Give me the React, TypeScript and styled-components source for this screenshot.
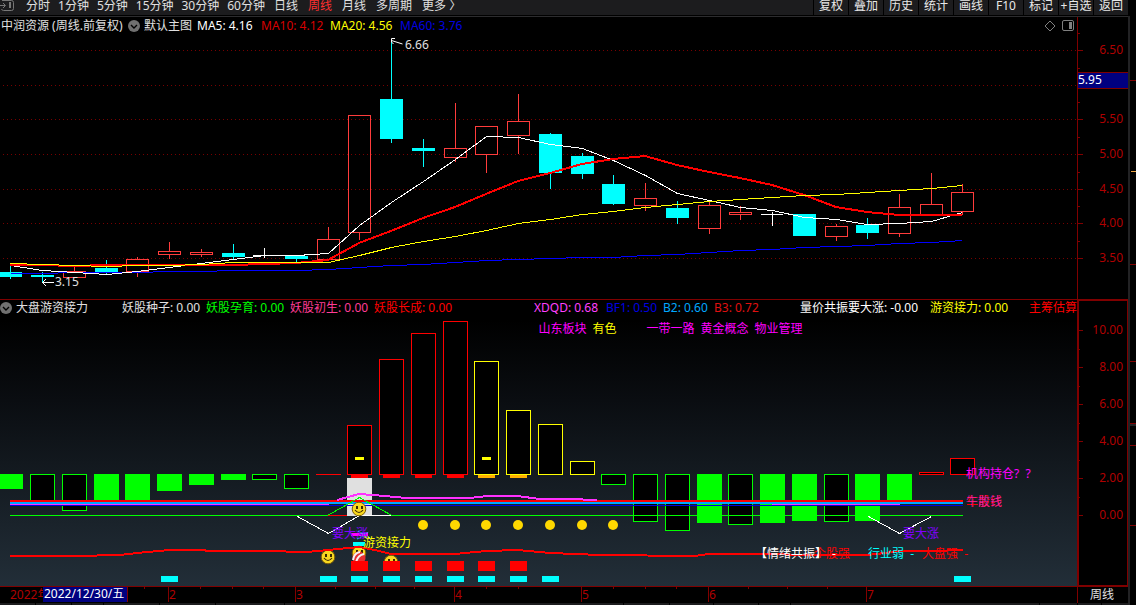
import React from "react";
import styled, { createGlobalStyle } from "styled-components";

const GlobalStyle = createGlobalStyle`
  * { box-sizing: border-box; }
  html, body { margin: 0; background: #000; }
  body, button {
    font-family: "Noto Sans", "Noto Sans CJK SC", sans-serif;
    font-size: 12px;
    line-height: 16px;
  }
  svg { display: block; overflow: hidden; }
  svg text {
    font-family: "Noto Sans", "Noto Sans CJK SC", sans-serif;
    font-size: 12px;
    white-space: pre;
  }
`;

const AXIS_RED = "#800000";
const LABEL_RED = "#b00000";

const Shell = styled.div`
  display: grid;
  grid-template-columns: minmax(0, 1fr) 8px;
  background: #000;
  color: #e0e0e0;
`;

const Main = styled.main`
  display: flex;
  flex-direction: column;
  min-width: 0;
`;

const Toolbar = styled.nav`
  display: flex;
  align-items: flex-start;
  height: 15px;
  background: #1c1c1e;
`;

const ToolbarRule = styled.div`
  height: 2px;
  border-bottom: 1px solid #2c2c2e;
`;

const Periods = styled.div`
  display: flex;
  flex: 1;
  gap: 8px;
  min-width: 0;
  padding-left: 12px;
`;

const PeriodGroup = styled.div`
  display: flex;
  gap: 10px;
  padding-left: 1px;
`;

const PeriodButton = styled.button<{ $active?: boolean }>`
  margin: 0;
  padding: 0;
  border: 0;
  background: none;
  height: 12px;
  line-height: 12px;
  white-space: nowrap;
  color: ${(p) => (p.$active ? "#ff3030" : "#e0e0e0")};
`;

const ToolButton = styled.button`
  flex: none;
  width: 35px;
  height: 15px;
  margin: 0;
  padding: 0 0 3px;
  border: 0;
  border-left: 1px solid #000;
  background: #1c1c1e;
  color: #e8e8e8;
  line-height: 12px;
  white-space: nowrap;
`;

const PanelRow = styled.section`
  display: grid;
  grid-template-columns: minmax(0, 1fr) 51px;
`;

const PricePlot = styled.div`
  height: 282px;
`;

const IndicatorPlot = styled.div`
  position: relative;
  height: 287px;
  border-top: 1px solid ${AXIS_RED};
  background: linear-gradient(#000 20px, #0a0d11 100px, #222e38 286px);
`;

const Legend = styled.div<{ $columns: string; $height: number }>`
  display: grid;
  grid-template-columns: ${(p) => p.$columns};
  align-items: center;
  height: ${(p) => p.$height}px;
  overflow: hidden;
  white-space: nowrap;
`;

const LegendTitle = styled.span<{ $inset?: boolean }>`
  display: flex;
  align-items: center;
  gap: 4px;
  padding-left: ${(p) => (p.$inset ? 1 : 0)}px;
  color: #e0e0e0;
`;

const LegendValue = styled.span<{ $color: string }>`
  color: ${(p) => p.$color};
`;

const LegendTools = styled.span`
  display: flex;
  justify-content: flex-end;
  align-items: center;
  gap: 6px;
  padding-right: 3px;
`;

const RoundButton = styled.button`
  display: block;
  flex: none;
  padding: 0;
  border: 0;
  background: none;
  width: 12px;
  height: 12px;
`;

const Themes = styled.div`
  position: absolute;
  top: 21px;
  left: 50%;
  display: flex;
  gap: 6px;
  white-space: nowrap;
`;

const Theme = styled.span<{ $color: string; $apart?: boolean }>`
  color: ${(p) => p.$color};
  padding-left: ${(p) => (p.$apart ? 12 : 0)}px;
  margin-left: ${(p) => (p.$apart ? 12 : 0)}px;
`;

const TimeRow = styled.div`
  display: grid;
  grid-template-columns: minmax(0, 1fr) 51px;
  height: 17px;
  border-top: 1px solid ${AXIS_RED};
`;

const PeriodCell = styled.div`
  border-left: 1px solid ${AXIS_RED};
  padding-right: 2px;
  text-align: center;
  color: #e0e0e0;
`;

const Footer = styled.div`
  display: flex;
  gap: 1px;
  height: 2px;
`;

const FooterCell = styled.div<{ $grow: number }>`
  flex: ${(p) => p.$grow} 1 0;
  background: #1c1c1e;
`;

const Gutter = styled.aside`
  border-left: 2px solid #222224;
  margin-top: 16px;
`;

const periods = ["分时", "1分钟", "5分钟", "15分钟", "30分钟", "60分钟"];
const longPeriods = ["日线", "周线", "月线", "多周期", "更多 〉"];
const tools = ["复权", "叠加", "历史", "统计", "画线", "F10", "标记", "+自选", "返回"];
const footerCells = [35, 36, 31, 56, 56, 68, 343, 45, 44, 44, 32, 251, 37, 24, 26];

const centres = [
  10, 42, 74, 106, 137, 169, 201, 233, 264, 296, 328, 359, 391, 423, 455, 486,
  518, 550, 582, 613, 645, 677, 709, 740, 772, 804, 836, 867, 899, 931, 962,
];

type Kind = "up" | "down" | "flat";
// kind, body top, body bottom, high, low
const candles: [Kind, number, number, number, number][] = [
  ["down", 272, 277, 266, 279], ["down", 275, 277, 272, 283],
  ["up", 271, 278, 266, 278], ["down", 268, 272, 260, 274],
  ["up", 259, 272, 257, 277], ["up", 251, 255, 242, 259],
  ["up", 252, 255, 249, 257], ["down", 253, 257, 244, 260],
  ["flat", 255, 256, 248, 258], ["down", 256, 259, 255, 262],
  ["up", 239, 260, 227, 260], ["up", 115, 233, 115, 240],
  ["down", 99, 139, 41, 143], ["down", 148, 151, 139, 167],
  ["up", 148, 158, 103, 162], ["up", 126, 155, 126, 173],
  ["up", 121, 136, 94, 154], ["down", 134, 173, 133, 189],
  ["down", 156, 174, 153, 179], ["down", 184, 204, 175, 205],
  ["up", 198, 206, 183, 211], ["down", 208, 218, 201, 224],
  ["up", 205, 229, 201, 234], ["up", 212, 215, 206, 220],
  ["flat", 214, 215, 212, 226], ["down", 214, 236, 214, 236],
  ["up", 226, 237, 224, 241], ["down", 225, 233, 218, 239],
  ["up", 207, 234, 194, 237], ["up", 204, 215, 173, 215],
  ["up", 192, 212, 184, 215],
];

const ma5 = [265, 270, 272, 274, 271, 267, 263, 259, 255, 255, 253, 225, 202, 181, 159, 136, 137, 144, 148, 160, 175, 193, 200, 207, 210, 217, 219, 224, 223, 221, 212];
const ma10 = [265, 265, 266, 265, 265, 265, 265, 265, 264, 263, 260, 243, 231, 218, 207, 194, 181, 173, 164, 159, 156, 165, 172, 178, 185, 195, 207, 212, 215, 215, 215];
const ma20 = [263, 264, 265, 266, 265, 265, 264, 262, 262, 262, 262, 255, 247, 241, 236, 230, 223, 219, 214, 211, 207, 204, 201, 199, 197, 195, 194, 192, 190, 188, 185];
const ma60 = [273, 273, 272, 272, 272, 271, 271, 270, 270, 270, 269, 267, 265, 264, 262, 260, 259, 258, 257, 257, 255, 254, 252, 250, 249, 247, 246, 245, 243, 242, 240];

const series = (values: number[]) => values.map((v, i) => `${centres[i]},${v}`).join(" ");

type Fill = "green" | "greenBox" | "redBox" | "yellowBox";
// style, top, bottom
const bars: [Fill, number, number][] = [
  ["green", 474, 489], ["greenBox", 474, 502], ["greenBox", 474, 511],
  ["green", 474, 502], ["green", 474, 502], ["green", 474, 491],
  ["green", 474, 485], ["green", 474, 480], ["greenBox", 474, 480],
  ["greenBox", 474, 489], ["redBox", 474, 475], ["redBox", 425, 475],
  ["redBox", 359, 475], ["redBox", 333, 475], ["redBox", 321, 475],
  ["yellowBox", 361, 475], ["yellowBox", 410, 475], ["yellowBox", 424, 475],
  ["yellowBox", 461, 475], ["greenBox", 474, 485], ["greenBox", 474, 522],
  ["greenBox", 474, 531], ["green", 474, 523], ["greenBox", 474, 525],
  ["green", 474, 523], ["green", 474, 521], ["greenBox", 474, 522],
  ["green", 474, 521], ["green", 474, 502], ["redBox", 472, 475],
  ["redBox", 458, 475],
];
const strokes: Record<Fill, string> = {
  green: "#00ff00", greenBox: "#00ff00", redBox: "#ff0000", yellowBox: "#ffff00",
};

function Chevron() {
  return (
    <svg width="12" height="12" viewBox="0 0 12 12">
      <circle cx="6" cy="6" r="6" fill="#707070" />
      <path d="M3 5l3 3 3-3" fill="none" stroke="#000" strokeWidth="1.4" />
    </svg>
  );
}

function Smiley({ x, y }: { x: number; y: number }) {
  return (
    <g>
      <circle cx={x} cy={y} r="6.8" fill="#f8d820" stroke="#7a5c08" />
      <rect x={x - 3} y={y - 3} width="2" height="3" fill="#3a2800" />
      <rect x={x + 2} y={y - 3} width="2" height="3" fill="#3a2800" />
      <path d={`M${x - 4} ${y + 1}q4 5 8 0`} fill="none" stroke="#3a2800" strokeWidth="1.2" />
    </g>
  );
}

function Candle({ index }: { index: number }) {
  const [kind, top, bottom, high, low] = candles[index];
  const c = centres[index];
  const left = c - 11;
  if (kind === "down") {
    return (
      <g fill="#00ffff">
        <rect x={c} y={high} width="1" height={low - high} />
        <rect x={left} y={top} width="23" height={bottom - top} />
      </g>
    );
  }
  if (kind === "flat") {
    return (
      <g fill="#fff">
        <rect x={c} y={high} width="1" height={low - high} />
        <rect x={left} y={top} width="22" height="1" />
      </g>
    );
  }
  return (
    <g fill="#ff3c3c">
      <rect x={c} y={high} width="1" height={top - high} />
      <rect x={c} y={bottom} width="1" height={low - bottom} />
      <rect x={left + 0.5} y={top + 0.5} width="22" height={bottom - top - 1} fill="none" stroke="#ff3c3c" />
    </g>
  );
}

function PriceChart() {
  return (
    <svg width="100%" height="264" role="img" aria-label="周线 K 线图">
      <g transform="translate(0 -35)">
        <g stroke="#780000" strokeDasharray="1 3" shapeRendering="crispEdges">
          {[50, 85, 119, 154, 189, 223, 258].map((y) => (
            <line key={y} x1="3" x2="100%" y1={y + 0.5} y2={y + 0.5} />
          ))}
        </g>
        <g shapeRendering="crispEdges">
          {candles.map((_, i) => <Candle key={i} index={i} />)}
        </g>
        <g fill="none" shapeRendering="crispEdges">
          <g transform="translate(0.5 0.5)">
            <polyline points={series(ma60)} stroke="#0000ff" />
            <polyline points={series(ma5)} stroke="#fff" />
          </g>
          <polyline points={series(ma10)} stroke="#ff0000" strokeWidth="2" />
          <polyline points={series(ma20)} stroke="#ffff00" transform="translate(0.5 0.5)" />
        </g>
        <g fill="none" stroke="#fff">
          <path d="M391.500 40.500L402.500 44M395 38.500h-3.500v3.500l2 2" />
          <path d="M42.500 282.500H54M46 279l-3.500 3.500L46 286" />
        </g>
        <text x="405" y="49" fill="#e0e0e0">6.66</text>
        <text x="55" y="286" fill="#e0e0e0">3.15</text>
      </g>
    </svg>
  );
}

function IndicatorChart() {
  return (
    <svg width="100%" height="270" role="img" aria-label="大盘游资接力指标">
      <g transform="translate(0 -316)">
        <g shapeRendering="crispEdges">
          {bars.map(([style, top, bottom], i) => {
            const x = centres[i] - 12;
            if (style === "green") {
              return <rect key={i} x={x} y={top} width="25" height={bottom - top} fill="#00ff00" />;
            }
            return (
              <rect key={i} x={x + 0.5} y={top + 0.5} width="24" height={bottom - top - 1} fill="#000" stroke={strokes[style]} />
            );
          })}
          <rect x="316" y="474" width="25" height="1" fill="#ff0000" />
          {[11, 12, 13, 14, 15, 16].map((i) => (
            <rect key={i} x={centres[i] - 8} y="475" width="17" height="3" fill={i > 14 ? "#ffb000" : "#ff0000"} />
          ))}
          {[11, 15].map((i) => (
            <rect key={i} x={centres[i] - 4} y="457" width="9" height="3" fill="#ffff00" />
          ))}
          <rect x="347" y="478" width="25" height="38" fill="#e0e0e0" />
          <rect x="10" y="500" width="953" height="2" fill="#ff0000" />
          <rect x="10" y="502" width="953" height="2" fill="#00a8ff" />
          <rect x="10" y="505" width="953" height="1" fill="#0000e0" />
          <rect x="10" y="504" width="319" height="1" fill="#ff30ff" />
          <rect x="772" y="504" width="128" height="1" fill="#ff30ff" />
          <g fill="none">
            <polyline points="337,500 359,494 373,495 407,498 443,498 470,498 487,496 517,496 540,499 568,499 597,500" stroke="#ff30ff" strokeWidth="2" />
            <path d="M10 515.500H328M391 515.500H963M328.500 515L359.500 497.500L391 515" stroke="#00ff00" />
            <path d="M328 515.500H347" stroke="#ff0000" />
            <path d="M297.500 516.500L328.500 533.500L359.500 515.500H391M868.500 516.500L899.500 533.500L931.500 516.500" stroke="#fff" />
          </g>
        </g>
        <g fill="#ffd800">
          {[13, 14, 15, 16, 17, 18, 19].map((i) => (
            <circle key={i} cx={centres[i]} cy="525" r="5" />
          ))}
        </g>
        <g shapeRendering="crispEdges">
          <rect x="351" y="533" width="17" height="3" fill="#ff00ff" />
          <rect x="353" y="542" width="12" height="4" fill="#00ffff" />
        </g>
        <path d="M358 531l5 3 6-2M357 539l6-3 8 2" stroke="#00ffff" strokeDasharray="2 1" fill="none" />
        <Smiley x={359} y={509} />
        <Smiley x={328} y={557} />
        <Smiley x={359} y={553} />
        <Smiley x={391} y={562} />
        <circle cx="359" cy="558" r="6.500" fill="#e83030" />
        <path d="M353 560q1-7 7-8M356 562q2-7 8-8" stroke="#f4f4f4" strokeWidth="2" fill="none" />
        <g shapeRendering="crispEdges">
          <polyline
            points="10,556 74,556 120,555 137,553 169,550 201,550 210,551 264,551 307,552 328,550 359,547 375,550 391,554 455,554 486,551 518,550 550,553 600,555 694,556 709,554 772,554 800,555 867,555 885,553 899,551 931,551 963,550"
            fill="none" stroke="#ff0000" strokeWidth="2"
          />
          {[11, 12, 13, 14, 15, 16].map((i) => (
            <rect key={i} x={centres[i] - 8} y="561" width="17" height="10" fill="#ff0000" />
          ))}
          {[5, 10, 11, 12, 13, 14, 15, 16, 17, 30].map((i) => (
            <rect key={i} x={centres[i] - 8} y="576" width="17" height="6" fill="#00ffff" />
          ))}
        </g>
        <text x="332" y="538" fill="#8000ff">要大涨</text>
        <text x="903" y="538" fill="#8000ff">要大涨</text>
        <text x="363" y="547" fill="#ffff00">游资接力</text>
        <text x="966" y="478" fill="#ff00ff">机构持仓?  ?</text>
        <text x="966" y="506" fill="#ff0000">车股线</text>
        <text x="966" y="506" fill="#ff30ff" fillOpacity="0.6">牛散钱</text>
        <text x="814" y="558" fill="#ff0000">个股强</text>
        <text x="755" y="558" fill="#fff">【情绪共振】</text>
        <text x="832" y="558" fill="#fff">-</text>
        <text x="868" y="558" fill="#00ffff">行业弱  -</text>
        <text x="922" y="558" fill="#ff0000">大盘强  -</text>
      </g>
    </svg>
  );
}

function PriceAxis() {
  const labels: [string, number][] = [
    ["6.50", 50], ["5.50", 119], ["5.00", 154], ["4.50", 189], ["4.00", 223], ["3.50", 258],
  ];
  return (
    <svg width="51" height="282">
      <g transform="translate(0 -17)">
        <g fill={AXIS_RED}>
          <rect x="0" y="17" width="1" height="282" />
          {labels.map(([t, y]) => <rect key={t} x="1" y={y} width="5" height="1" />)}
          {[33, 68, 102, 137, 172, 206, 241].map((y) => <rect key={y} x="1" y={y} width="2" height="1" />)}
          <rect x="0" y="72" width="51" height="17" />
        </g>
        <rect x="1" y="73" width="50" height="15" fill="#000080" />
        <text x="1" y="84" fill="#fff">5.95</text>
        {labels.map(([t, y]) => (
          <text key={t} x="46" y={y + 4} textAnchor="end" fill={LABEL_RED}>{t}</text>
        ))}
      </g>
    </svg>
  );
}

function IndicatorAxis() {
  const labels: [string, number][] = [
    ["10.00", 330], ["8.00", 367], ["6.00", 404], ["4.00", 441], ["2.00", 478], ["0.00", 515],
  ];
  return (
    <svg width="51" height="287">
      <g transform="translate(0 -299)">
        <g fill={AXIS_RED}>
          <rect x="0" y="299" width="51" height="2" />
          <rect x="0" y="299" width="2" height="287" />
          <rect x="50" y="299" width="1" height="287" />
          <rect x="0" y="585" width="51" height="1" />
          {labels.map(([t, y]) => <rect key={t} x="2" y={y} width="4" height="1" />)}
          {[349, 386, 423, 460, 497].map((y) => <rect key={y} x="2" y={y} width="1" height="1" />)}
        </g>
        {labels.map(([t, y]) => (
          <text key={t} x="46" y={y + 4} textAnchor="end" fill={LABEL_RED}>{t}</text>
        ))}
      </g>
    </svg>
  );
}

function TimeAxis() {
  const months: [string, number][] = [["2", 168], ["3", 295], ["4", 454], ["5", 581], ["6", 708], ["7", 866]];
  return (
    <svg width="100%" height="16">
      <g fill={AXIS_RED}>
        {[144, 200, 232, 263, 335, 375, 414, 486, 518, 613, 645, 676, 748, 787, 827].map((x) => (
          <rect key={x} x={x} y="0" width="1" height="2" />
        ))}
        {months.map(([m, x]) => <rect key={m} x={x} y="0" width="1" height="15" />)}
        <rect x="43" y="0" width="85" height="15" />
      </g>
      <text x="10" y="12" fill={LABEL_RED}>2022年</text>
      <rect x="43" y="0" width="84" height="15" fill="#000080" />
      <text x="44" y="11" fill="#fff">2022/12/30/五</text>
      {months.map(([m, x]) => <text key={m} x={x + 1} y="12" fill={LABEL_RED}>{m}</text>)}
    </svg>
  );
}

export default function App() {
  return (
    <>
      <GlobalStyle />
      <Shell>
        <Main>
          <Toolbar>
            <svg width="14" height="12" viewBox="0 0 14 12" fill="none" stroke="#777">
              <path d="M2 0.500h9.500q2 0 2 2v6q0 2-2 2h-8q-1.500 0-2-1.500M0 5.500h5M3 3l2.500 2.500L3 8" />
              <rect x="9" y="2" width="2" height="6" fill="#777" stroke="none" />
            </svg>
            <Periods>
              {periods.map((p) => <PeriodButton key={p}>{p}</PeriodButton>)}
              <PeriodGroup>
                {longPeriods.map((p) => (
                  <PeriodButton key={p} $active={p === "周线"}>{p}</PeriodButton>
                ))}
              </PeriodGroup>
            </Periods>
            {tools.map((t) => <ToolButton key={t}>{t}</ToolButton>)}
          </Toolbar>
          <ToolbarRule />

          <PanelRow>
            <PricePlot>
              <Legend $columns="128px 69px 64px 69px 70px 70px 1fr" $height={18}>
                <LegendTitle $inset>中润资源 (周线.前复权)</LegendTitle>
                <LegendTitle>
                  <RoundButton aria-label="主图菜单"><Chevron /></RoundButton>
                  默认主图
                </LegendTitle>
                <LegendValue $color="#ffffff">MA5: 4.16</LegendValue>
                <LegendValue $color="#d80000">MA10: 4.12</LegendValue>
                <LegendValue $color="#ffff00">MA20: 4.56</LegendValue>
                <LegendValue $color="#0000e0">MA60: 3.76</LegendValue>
                <LegendTools>
                  <svg width="12" height="12" fill="none" stroke="#808080">
                    <path d="M6 1l5 5-5 5-5-5z" />
                  </svg>
                  <svg width="12" height="12" fill="none" stroke="#808080">
                    <rect x="0.5" y="0.5" width="11" height="10" rx="1.500" />
                    <rect x="7" y="2" width="3" height="7" fill="#808080" stroke="none" />
                  </svg>
                </LegendTools>
              </Legend>
              <PriceChart />
            </PricePlot>
            <PriceAxis />
          </PanelRow>

          <PanelRow>
            <IndicatorPlot>
              <Legend $columns="122px 84px 84px 84px 160px 72px 57px 51px 86px 130px 99px 1fr" $height={16}>
                <LegendTitle>
                  <RoundButton aria-label="指标菜单"><Chevron /></RoundButton>
                  大盘游资接力
                </LegendTitle>
                <LegendValue $color="#e0e0e0">妖股种子: 0.00</LegendValue>
                <LegendValue $color="#00ff00">妖股孕育: 0.00</LegendValue>
                <LegendValue $color="#ff3c96">妖股初生: 0.00</LegendValue>
                <LegendValue $color="#ff0000">妖股长成: 0.00</LegendValue>
                <LegendValue $color="#ff40ff">XDQD: 0.68</LegendValue>
                <LegendValue $color="#0000e0">BF1: 0.50</LegendValue>
                <LegendValue $color="#00a8ff">B2: 0.60</LegendValue>
                <LegendValue $color="#e01010">B3: 0.72</LegendValue>
                <LegendValue $color="#ffffff">量价共振要大涨: -0.00</LegendValue>
                <LegendValue $color="#ffff00">游资接力: 0.00</LegendValue>
                <LegendValue $color="#ff0000">主筹估算</LegendValue>
              </Legend>
              <IndicatorChart />
              <Themes>
                <Theme $color="#ff00ff">山东板块</Theme>
                <Theme $color="#ffff00">有色</Theme>
                <Theme $color="#ff00ff" $apart>一带一路</Theme>
                <Theme $color="#ff00ff">黄金概念</Theme>
                <Theme $color="#ff00ff">物业管理</Theme>
              </Themes>
            </IndicatorPlot>
            <IndicatorAxis />
          </PanelRow>

          <TimeRow>
            <TimeAxis />
            <PeriodCell>周线</PeriodCell>
          </TimeRow>
          <Footer>
            {footerCells.map((w, i) => <FooterCell key={i} $grow={w} />)}
          </Footer>
        </Main>
        <Gutter>
          <svg width="6" height="589">
            <g transform="translate(0 -16)" fill={AXIS_RED}>
              {[80, 264, 361, 423, 445, 525].map((y) => <rect key={y} x="0" y={y} width="6" height="1" />)}
              <rect x="0" y="424" width="6" height="2" fill="#222224" />
              <rect x="1" y="171" width="5" height="1" fill="#e8a040" />
            </g>
          </svg>
        </Gutter>
      </Shell>
    </>
  );
}
